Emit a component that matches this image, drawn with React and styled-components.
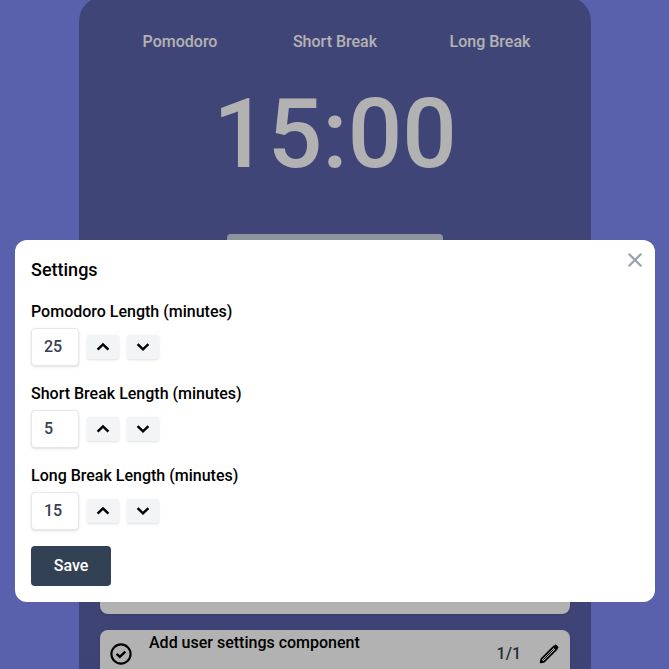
import React, { useState } from "react";
import styled, { createGlobalStyle } from "styled-components";

const GlobalStyle = createGlobalStyle`
  *, *::before, *::after { box-sizing: border-box; }
  html, body { margin: 0; height: 100%; overflow: hidden; }
  body, button, input { font-family: Roboto, sans-serif; font-size: 16px; font-weight: 500; line-height: 24px; }
  h1, h2, p { margin: 0; font-weight: 500; }
`;

const Page = styled.div`
  height: 100vh;
  padding-left: 1px;
  overflow: hidden;
  background: #828cf6;
`;

const Panel = styled.main`
  display: flex;
  flex-direction: column;
  align-items: center;
  width: 512px;
  height: 760px;
  margin: -3px auto 0;
  padding: 33px 21px 0;
  border-radius: 24px;
  background: linear-gradient(#5c64ac, #5a61a8);
`;

const Modes = styled.nav`
  display: grid;
  grid-template-columns: repeat(3, 155px);
`;

const Mode = styled.button`
  padding: 0;
  border: 0;
  background: none;
  color: #fff;
`;

const Timer = styled.h1`
  margin-top: 32px;
  color: #fff;
  font-size: 96px;
  line-height: 96px;
`;

const StartButton = styled.button`
  width: 216px;
  height: 56px;
  margin-top: 52px;
  border: 0;
  border-radius: 4px;
  background: #cbd5e1;
`;

const TaskList = styled.section`
  display: flex;
  flex-direction: column;
  gap: 16px;
  width: 470px;
  margin-top: 276px;
`;

const Task = styled.article`
  display: flex;
  align-items: flex-start;
  height: 48px;
  padding: 0 9px;
  border-radius: 8px;
  background: #fff;
  box-shadow: 0 1px 3px rgba(0, 0, 0, 0.1), 0 1px 2px -1px rgba(0, 0, 0, 0.1);
`;

const TaskIcon = styled.span`
  display: flex;
  margin-top: 12px;
`;

const TaskName = styled.p`
  flex: 1;
  margin: 1px 0 0 16px;
`;

const TaskCount = styled.p`
  margin: 12px 16px 0 0;
  color: #374151;
`;

const Overlay = styled.div`
  position: fixed;
  inset: 0;
  display: flex;
  align-items: flex-start;
  justify-content: center;
  padding: 240px 14px 0 15px;
  background: rgba(0, 0, 0, 0.3);
`;

const Modal = styled.section`
  position: relative;
  width: 640px;
  height: 362px;
  padding: 16px;
  border-radius: 12px;
  background: #fff;
  color: #000;
`;

const CloseButton = styled.button`
  position: absolute;
  top: 8px;
  right: 8px;
  display: flex;
  padding: 0;
  border: 0;
  background: none;
  color: #9ca3af;
`;

const Title = styled.h2`
  font-size: 18px;
  line-height: 28px;
`;

const Fields = styled.div`
  display: grid;
  gap: 16px;
  margin-top: 16px;
`;

const Field = styled.div`
  height: 66px;
`;

const Label = styled.label`
  display: block;
`;

const Controls = styled.div`
  display: flex;
  align-items: center;
  gap: 8px;
  height: 38px;
  margin-top: 4px;
`;

const MinutesInput = styled.input`
  width: 48px;
  height: 38px;
  padding: 0 12px 2px;
  border: 1px solid #e5e7eb;
  border-radius: 4px;
  outline: none;
  background: #fff;
  color: #374151;
  box-shadow: 0 1px 3px rgba(0, 0, 0, 0.1), 0 1px 2px -1px rgba(0, 0, 0, 0.1);
`;

const StepButton = styled.button`
  display: flex;
  align-items: center;
  justify-content: center;
  width: 32px;
  height: 24px;
  padding: 0;
  border: 0;
  border-radius: 2px;
  background: #f3f4f6;
  color: #000;
  box-shadow: 0 1px 3px rgba(0, 0, 0, 0.1), 0 1px 2px -1px rgba(0, 0, 0, 0.1);
`;

const SaveButton = styled.button`
  width: 80px;
  height: 40px;
  margin-top: 16px;
  padding: 0;
  border: 0;
  border-radius: 4px;
  background: #334155;
  color: #fff;
`;

const Chevron = ({ up }) => (
  <svg width="24" height="24" viewBox="0 0 24 24" fill="none" stroke="currentColor" strokeWidth="2.5">
    <path d={up ? "M6.6 14.6L12 9.4l5.4 5.2" : "M6.6 9.1l5.4 5.2 5.4-5.2"} />
  </svg>
);

const Cross = () => (
  <svg width="24" height="24" viewBox="0 0 24 24" fill="none" stroke="currentColor" strokeWidth="2.3">
    <path d="M5.7 5.7l12.6 12.6M18.3 5.7L5.7 18.3" />
  </svg>
);

const CheckCircle = () => (
  <svg width="24" height="24" viewBox="0 0 24 24" fill="none" stroke="#000" strokeWidth="2.1">
    <circle cx="12" cy="12" r="9.6" />
    <path d="M7.6 11.9l3.2 3 5.5-5.3" strokeWidth="2.3" />
  </svg>
);

const Pencil = () => (
  <svg width="24" height="24" viewBox="0 0 24 24" fill="none" stroke="#000" strokeWidth="1.7" strokeLinejoin="round">
    <path d="M3.7 20.3l.7-3.5L16.9 4.3l2.8 2.8L7.2 19.6z" />
    <path d="M6.4 17.6L16.4 7.6" strokeWidth="1" />
    <path d="M16.2 5l1.7-1.7q.8-.7 1.6 0l1.2 1.2q.7.8 0 1.6L19 7.8z" fill="#000" strokeWidth=".8" />
    <path d="M3.7 20.3l.5-2 1.5 1.5z" fill="#000" />
  </svg>
);

const settings = [
  { name: "Pomodoro", minutes: 25 },
  { name: "Short Break", minutes: 5 },
  { name: "Long Break", minutes: 15 },
];

function LengthField({ name, minutes }) {
  const [value, setValue] = useState(minutes);
  const id = name.replace(" ", "-").toLowerCase();
  return (
    <Field>
      <Label htmlFor={id}>{name} Length (minutes)</Label>
      <Controls>
        <MinutesInput id={id} value={value} onChange={(e) => setValue(Number(e.target.value) || 0)} />
        <StepButton aria-label="Increase" onClick={() => setValue(value + 1)}><Chevron up /></StepButton>
        <StepButton aria-label="Decrease" onClick={() => setValue(Math.max(1, value - 1))}><Chevron /></StepButton>
      </Controls>
    </Field>
  );
}

export default function App() {
  return (
    <>
      <GlobalStyle />
      <Page>
        <Panel>
          <Modes>
            {settings.map((s) => <Mode key={s.name}>{s.name}</Mode>)}
          </Modes>
          <Timer>15:00</Timer>
          <StartButton aria-label="Start" />
          <TaskList>
            <Task />
            <Task>
              <TaskIcon><CheckCircle /></TaskIcon>
              <TaskName>Add user settings component</TaskName>
              <TaskCount>1/1</TaskCount>
              <TaskIcon><Pencil /></TaskIcon>
            </Task>
          </TaskList>
        </Panel>
      </Page>
      <Overlay>
        <Modal role="dialog" aria-label="Settings">
          <CloseButton aria-label="Close"><Cross /></CloseButton>
          <Title>Settings</Title>
          <Fields>
            {settings.map((s) => <LengthField key={s.name} {...s} />)}
          </Fields>
          <SaveButton>Save</SaveButton>
        </Modal>
      </Overlay>
    </>
  );
}
